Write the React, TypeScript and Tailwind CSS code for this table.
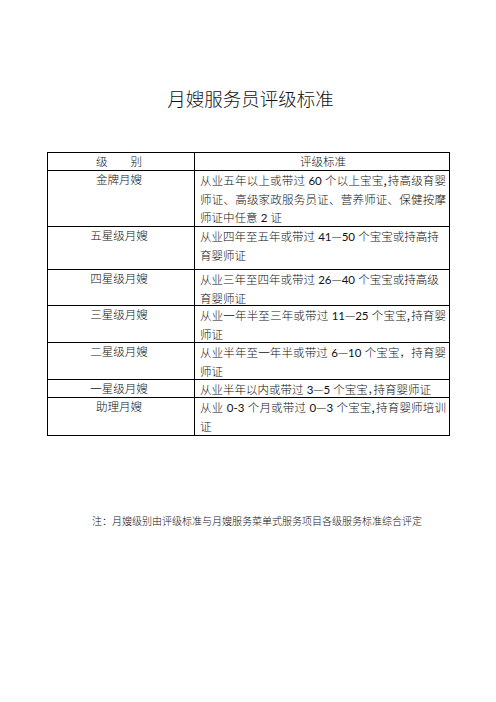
import React from "react";

type Line = { t: string; j?: boolean; halt?: boolean };
type Row = { name: string; h: string; lines: Line[] };

const rows: Row[] = [
  {
    name: "金牌月嫂",
    h: "h-[56px]",
    lines: [
      { t: "从业五年以上或带过 60 个以上宝宝,持高级育婴", j: true },
      { t: "师证、高级家政服务员证、营养师证、保健按摩", j: true },
      { t: "师证中任意 2 证" },
    ],
  },
  {
    name: "五星级月嫂",
    h: "h-[43px]",
    lines: [{ t: "从业四年至五年或带过 41—50 个宝宝或持高持" }, { t: "育婴师证" }],
  },
  {
    name: "四星级月嫂",
    h: "h-[36px]",
    lines: [{ t: "从业三年至四年或带过 26—40 个宝宝或持高级" }, { t: "育婴师证" }],
  },
  {
    name: "三星级月嫂",
    h: "h-[37px]",
    lines: [{ t: "从业一年半至三年或带过 11—25 个宝宝,持育婴", j: true }, { t: "师证" }],
  },
  {
    name: "二星级月嫂",
    h: "h-[37px]",
    lines: [{ t: "从业半年至一年半或带过 6—10 个宝宝，持育婴", j: true }, { t: "师证" }],
  },
  {
    name: "一星级月嫂",
    h: "h-[18px]",
    lines: [{ t: "从业半年以内或带过 3—5 个宝宝，持育婴师证", halt: true }],
  },
  {
    name: "助理月嫂",
    h: "h-[38px]",
    lines: [{ t: "从业 0-3 个月或带过 0—3 个宝宝,持育婴师培训", j: true }, { t: "证" }],
  },
];

const cjk = { fontFamily: '"Noto Sans CJK SC", sans-serif' };

function renderText(s: string, halt?: boolean) {
  const parts = s.split(/([0-9\-]+|—|，|,)/);
  return parts.map((p, i) => {
    if (p === "") return null;
    if (/^[0-9\-]+$/.test(p))
      return (
        <span key={i} className="font-normal">
          {p}
        </span>
      );
    if (p === "—" || p === ",")
      return (
        <span key={i} className={p === "," ? "font-normal pr-[1px]" : ""} style={cjk}>
          {p}
        </span>
      );
    if (p === "，" && halt)
      return (
        <span key={i} className="[font-feature-settings:'halt']">
          ，
        </span>
      );
    return <React.Fragment key={i}>{p}</React.Fragment>;
  });
}

export default function App() {
  return (
    <div
      className="w-[496px] h-[702px] bg-white text-[#111] font-light pt-[90px]"
      style={{ fontFamily: '"Lato", "Noto Sans CJK SC", sans-serif' }}
    >
      <div className="text-center pl-[5px] text-[18.5px] leading-[19px] h-[19px]">月嫂服务员评级标准</div>

      <div className="mt-[43px] ml-[47px] w-[403px] border-l border-t border-black text-[11.5px] leading-[18.5px]">
        <div className="flex h-[18px]">
          <div className="w-[147px] shrink-0 border-r border-b border-black text-center pr-[4px] whitespace-pre">
            级　　别
          </div>
          <div className="w-[255px] shrink-0 border-r border-b border-black text-center pl-[5px] pr-[3px]">
            评级标准
          </div>
        </div>
        {rows.map((r) => (
          <div key={r.name} className={`flex ${r.h}`}>
            <div className="w-[147px] shrink-0 border-r border-b border-black text-center pr-[4px]">{r.name}</div>
            <div className="w-[255px] shrink-0 border-r border-b border-black pl-[5px] pr-[3px]">
              {r.lines.map((l, i) => (
                <div
                  key={i}
                  className={l.j ? "whitespace-nowrap text-justify [text-align-last:justify]" : "whitespace-nowrap"}
                >
                  {renderText(l.t, l.halt)}
                </div>
              ))}
            </div>
          </div>
        ))}
      </div>

      <div className="mt-[80px] ml-[92px] text-[10px] leading-[10px]">
        注：月嫂级别由评级标准与月嫂服务菜单式服务项目各级服务标准综合评定
      </div>
    </div>
  );
}
